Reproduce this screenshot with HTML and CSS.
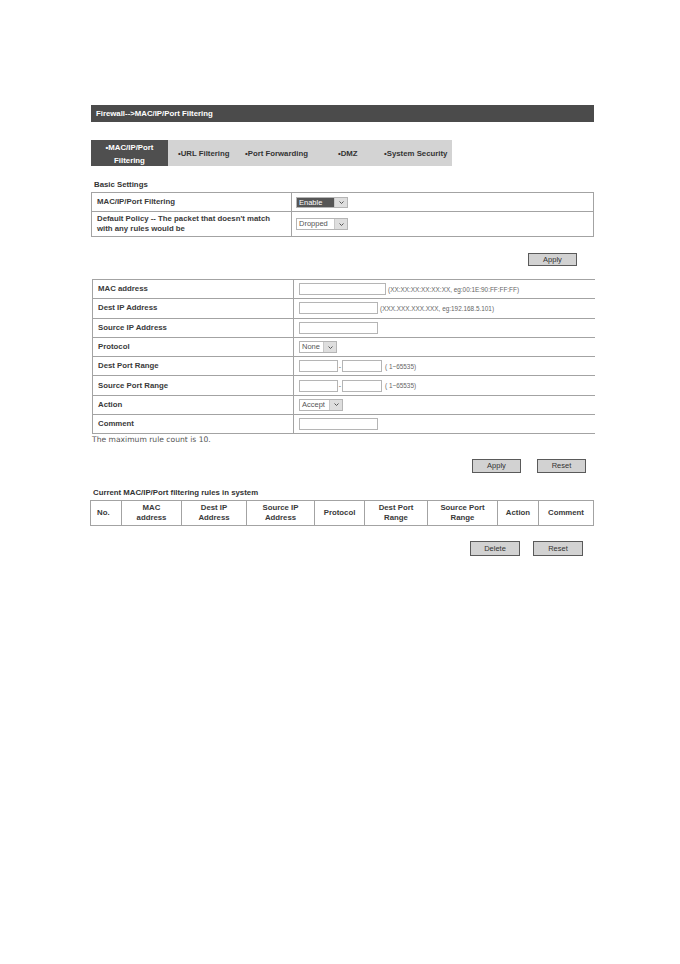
FILE: index.html
```html
<!DOCTYPE html>
<html>
<head>
<meta charset="utf-8">
<link rel="stylesheet" href="styles.css">
</head>
<body>
<div class="page">
  <div class="titlebar">Firewall--&gt;MAC/IP/Port Filtering</div>

  <div class="tabs">
    <div class="tab tab-active">•MAC/IP/Port<br>Filtering</div>
    <div class="tab tab-url">•URL Filtering</div>
    <div class="tab tab-pf">•Port Forwarding</div>
    <div class="tab tab-dmz">•DMZ</div>
    <div class="tab tab-sec">•System Security</div>
  </div>

  <div class="section-title st-basic">Basic Settings</div>
  <table class="grid basic">
    <tr class="r1">
      <td class="lbl lbl-basic">MAC/IP/Port Filtering</td>
      <td class="val val-basic">
        <span class="sel sel-enable"><span class="sel-val sel-hl">Enable</span><span class="sel-arrow"><svg width="7" height="5" viewBox="0 0 7 5"><polyline points="1.5,1.5 3.5,3.5 5.5,1.5" fill="none" stroke="#555" stroke-width="1"/></svg></span></span>
      </td>
    </tr>
    <tr class="r2">
      <td class="lbl lbl-basic">Default Policy -- The packet that doesn't match<br>with any rules would be</td>
      <td class="val val-basic">
        <span class="sel sel-dropped"><span class="sel-val">Dropped</span><span class="sel-arrow"><svg width="7" height="5" viewBox="0 0 7 5"><polyline points="1.5,1.5 3.5,3.5 5.5,1.5" fill="none" stroke="#555" stroke-width="1"/></svg></span></span>
      </td>
    </tr>
  </table>

  <div class="btnrow btnrow-1">
    <span class="btn">Apply</span>
  </div>

  <table class="grid main">
    <tr>
      <td class="lbl">MAC address</td>
      <td class="val"><span class="inp w-mac"></span><span class="hint">(XX:XX:XX:XX:XX:XX, eg:00:1E:90:FF:FF:FF)</span></td>
    </tr>
    <tr>
      <td class="lbl">Dest IP Address</td>
      <td class="val"><span class="inp w-ip"></span><span class="hint">(XXX.XXX.XXX.XXX, eg:192.168.5.101)</span></td>
    </tr>
    <tr>
      <td class="lbl">Source IP Address</td>
      <td class="val"><span class="inp w-ip"></span></td>
    </tr>
    <tr>
      <td class="lbl">Protocol</td>
      <td class="val"><span class="sel sel-none"><span class="sel-val">None</span><span class="sel-arrow"><svg width="7" height="5" viewBox="0 0 7 5"><polyline points="1.5,1.5 3.5,3.5 5.5,1.5" fill="none" stroke="#555" stroke-width="1"/></svg></span></span></td>
    </tr>
    <tr>
      <td class="lbl">Dest Port Range</td>
      <td class="val"><span class="inp w-port"></span><span class="dash">-</span><span class="inp w-port2"></span><span class="hint hint-port">( 1~65535)</span></td>
    </tr>
    <tr>
      <td class="lbl">Source Port Range</td>
      <td class="val"><span class="inp w-port"></span><span class="dash">-</span><span class="inp w-port2"></span><span class="hint hint-port">( 1~65535)</span></td>
    </tr>
    <tr>
      <td class="lbl">Action</td>
      <td class="val"><span class="sel sel-accept"><span class="sel-val">Accept</span><span class="sel-arrow"><svg width="7" height="5" viewBox="0 0 7 5"><polyline points="1.5,1.5 3.5,3.5 5.5,1.5" fill="none" stroke="#555" stroke-width="1"/></svg></span></span></td>
    </tr>
    <tr>
      <td class="lbl">Comment</td>
      <td class="val"><span class="inp w-ip"></span></td>
    </tr>
  </table>
  <div class="note">The maximum rule count is 10.</div>

  <div class="btnrow btnrow-2">
    <span class="btn">Apply</span>
    <span class="btn">Reset</span>
  </div>

  <div class="section-title st-rules">Current MAC/IP/Port filtering rules in system</div>
  <table class="grid rules">
    <colgroup>
      <col class="c-no">
      <col class="c-mac">
      <col class="c-dip">
      <col class="c-sip">
      <col class="c-proto">
      <col class="c-dpr">
      <col class="c-spr">
      <col class="c-act">
      <col class="c-com">
    </colgroup>
    <tr>
      <th class="h-no">No.</th>
      <th>MAC<br>address</th>
      <th>Dest IP<br>Address</th>
      <th>Source IP<br>Address</th>
      <th>Protocol</th>
      <th>Dest Port<br>Range</th>
      <th>Source Port<br>Range</th>
      <th>Action</th>
      <th>Comment</th>
    </tr>
  </table>

  <div class="btnrow btnrow-3">
    <span class="btn">Delete</span>
    <span class="btn">Reset</span>
  </div>
</div>
</body>
</html>
```

FILE: styles.css
```css
html, body {
  margin: 0;
  padding: 0;
  background: #ffffff;
}

body {
  font-family: "Liberation Sans", Arial, sans-serif;
  color: #333333;
}

.page {
  width: 503px;
  margin-left: 91px;
  padding-top: 105px;
}

.titlebar {
  height: 17px;
  background: #4b4b4b;
  color: #ffffff;
  font-weight: bold;
  font-size: 7.8px;
  line-height: 17px;
  padding-left: 5px;
  box-sizing: border-box;
}

.tabs {
  margin-top: 18px;
  width: 361px;
  height: 26px;
  background: #d3d3d3;
  display: flex;
}

.tab {
  font-weight: bold;
  font-size: 7.8px;
  color: #333333;
  line-height: 27px;
  box-sizing: border-box;
  white-space: nowrap;
}

.tab-active {
  width: 77px;
  background: #4f4f4f;
  color: #ffffff;
  text-align: center;
  line-height: 12.5px;
  padding-top: 2px;
}

.tab-url { width: 70px; padding-left: 10px; }
.tab-pf { width: 92px; padding-left: 7px; }
.tab-dmz { width: 48px; padding-left: 8px; }
.tab-sec { width: 74px; padding-left: 6px; }

.section-title {
  font-weight: bold;
  font-size: 7.8px;
  color: #333333;
  padding-left: 3px;
}

.st-basic {
  margin-top: 14px;
  height: 12px;
  line-height: 10px;
}

.grid {
  border-collapse: collapse;
  table-layout: fixed;
}

.grid td, .grid th {
  border: 1px solid #a3a3a3;
  padding: 0;
}

.basic {
  width: 503px;
}

.basic .r1 td { height: 18px; }
.basic .r2 td { height: 24px; }

.lbl {
  width: 200px;
  font-weight: bold;
  font-size: 7.8px;
  color: #3a3a3a;
  padding-left: 5px !important;
  line-height: 10px;
  box-sizing: border-box;
  vertical-align: middle;
}

.val {
  padding-left: 5px !important;
  vertical-align: middle;
  white-space: nowrap;
  font-size: 0;
}

.val-basic {
  padding-left: 4px !important;
}

.sel {
  display: inline-flex;
  align-items: stretch;
  vertical-align: middle;
  border: 1px solid #b5b5b5;
  box-sizing: border-box;
  height: 12px;
  background: #ffffff;
}

.sel-val {
  flex: 1;
  font-size: 7.5px;
  line-height: 10px;
  color: #555555;
  padding-left: 2px;
}

.sel-hl {
  background: #565656;
  color: #ffffff;
}

.sel-arrow {
  width: 12px;
  background: #dedede;
  border-left: 1px solid #c8c8c8;
  display: flex;
  align-items: center;
  justify-content: center;
}

.sel-enable { width: 52px; height: 11px; }
.sel-enable .sel-val { line-height: 9px; }
.sel-dropped { width: 52px; }
.sel-none { width: 38px; }
.sel-accept { width: 44px; }

.btnrow {
  display: flex;
  justify-content: flex-end;
}

.btn {
  display: inline-block;
  width: 49px;
  height: 14px;
  box-sizing: border-box;
  border: 1px solid #5a5a5a;
  background: #d2d2d2;
  color: #333333;
  font-size: 7.5px;
  line-height: 12px;
  text-align: center;
}

.btnrow-1 {
  margin-top: 16px;
  padding-right: 17px;
}

.btnrow-1 .btn { height: 13px; line-height: 11px; }

.main {
  width: 503px;
  margin-left: 1px;
  margin-top: 13px;
}

.main td {
  height: 18.3px;
}

.main tr td:last-child {
  border-right: none;
}

.main .lbl {
  width: 201px;
}

.inp {
  display: inline-block;
  vertical-align: middle;
  height: 12px;
  border: 1px solid #b5b5b5;
  box-sizing: border-box;
  background: #ffffff;
}

.w-mac { width: 87px; }
.w-ip { width: 79px; }
.w-port { width: 39px; }
.w-port2 { width: 40px; }

.dash {
  display: inline-block;
  vertical-align: middle;
  font-size: 7px;
  color: #666666;
  width: 4px;
  text-align: center;
}

.hint {
  display: inline-block;
  vertical-align: middle;
  font-size: 6.4px;
  color: #666666;
  margin-left: 2px;
}

.hint-port {
  margin-left: 3px;
}

.note {
  font-family: "DejaVu Sans", sans-serif;
  font-size: 7.6px;
  color: #555555;
  padding-left: 1px;
  line-height: 10px;
  margin-top: 1px;
}

.btnrow-2 {
  margin-top: 14px;
  gap: 16px;
  padding-right: 8px;
}

.st-rules {
  margin-top: 15px;
  padding-left: 2px;
  line-height: 10px;
  height: 11px;
}

.rules {
  width: 503px;
  margin-left: -1px;
  margin-top: 1px;
}

.rules th {
  height: 24px;
  font-weight: bold;
  font-size: 7.8px;
  color: #3a3a3a;
  line-height: 10px;
  text-align: center;
  vertical-align: middle;
}

.rules .h-no { text-align: left; padding-left: 6px; }

.c-no { width: 31px; }
.c-mac { width: 60px; }
.c-dip { width: 65px; }
.c-sip { width: 68px; }
.c-proto { width: 50px; }
.c-dpr { width: 63px; }
.c-spr { width: 70px; }
.c-act { width: 41px; }
.c-com { width: 55px; }

.btnrow-3 {
  margin-top: 15px;
  gap: 13px;
  padding-right: 11px;
}

.btnrow-3 .btn { height: 15px; width: 50px; line-height: 13px; }
```
